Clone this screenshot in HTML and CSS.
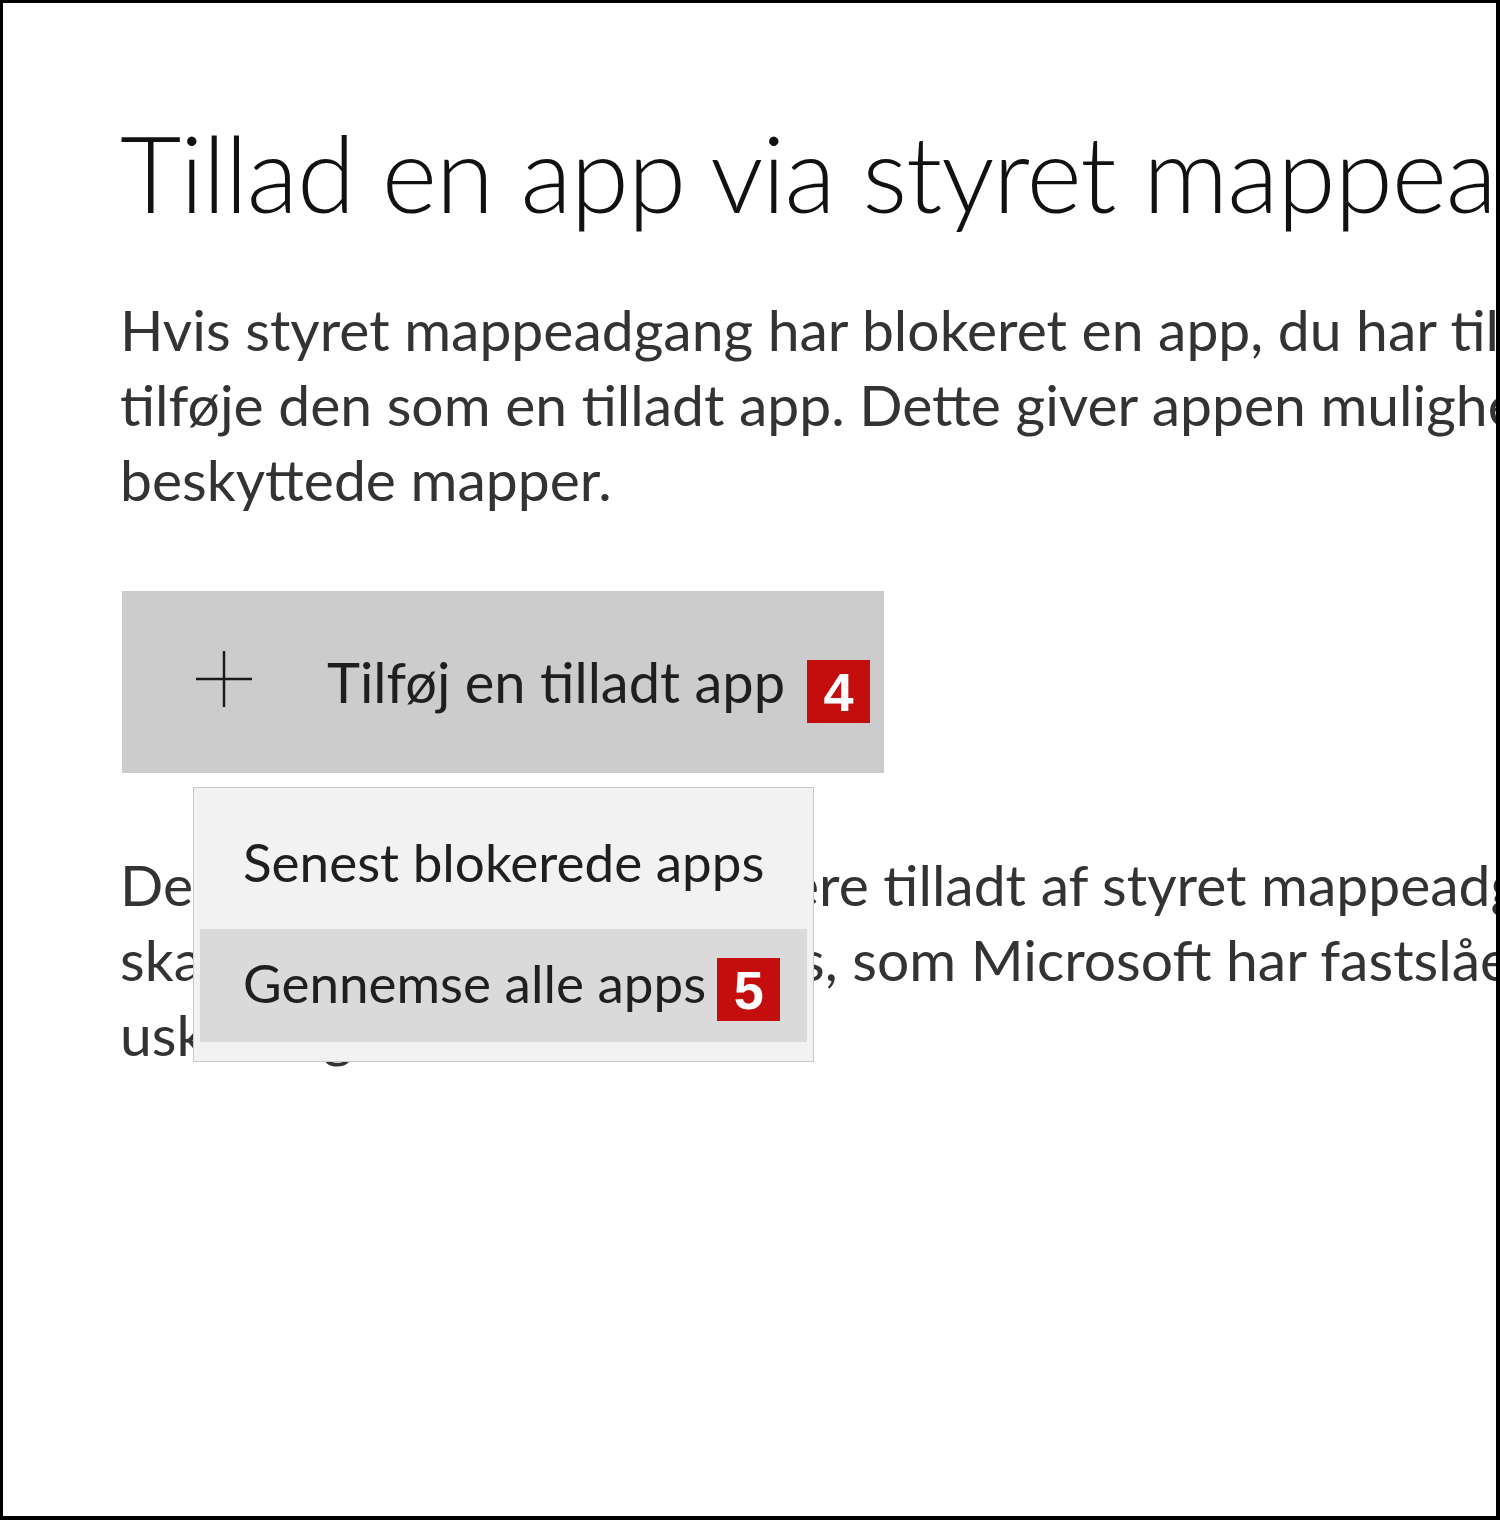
FILE: index.html
```html
<!DOCTYPE html>
<html lang="da">
<head>
<meta charset="utf-8">
<title>Tillad en app via styret mappeadgang</title>
<link rel="stylesheet" href="styles.css">
</head>
<body>
<div class="frame">
  <div class="content">
    <h1 class="title">Tillad en app via styret mappeadgang</h1>
    <p class="desc">Hvis styret mappeadgang har blokeret en app, du har tillid til, kan du<br>tilføje den som en tilladt app. Dette giver appen mulighed for at foretage ændringer i<br>beskyttede mapper.</p>
    <div class="btn-area">
      <button class="add-btn" type="button">
        <svg class="plus" viewBox="0 0 56 56" aria-hidden="true"><path d="M28 0V56M0 28H56" /></svg>
        <span class="btn-label">Tilføj en tilladt app</span>
        <span class="badge badge-btn">4</span>
      </button>
      <div class="menu">
        <div class="menu-item">Senest blokerede apps</div>
        <div class="menu-item menu-item-hover">Gennemse alle apps<span class="badge badge-menu">5</span></div>
      </div>
    </div>
    <p class="desc desc-2">De fleste af dine apps vil være tilladt af styret mappeadgang, uden at du behøver<br>skal tilføje dem her. De apps, som Microsoft har fastslået som venlige, er altid<br>uskadelige.</p>
  </div>
</div>
</body>
</html>
```
FILE: styles.css
```css
html, body {
  margin: 0;
  padding: 0;
  background: #ffffff;
}

.frame {
  box-sizing: border-box;
  width: 1500px;
  height: 1520px;
  border-style: solid;
  border-color: #000000;
  border-width: 3px 4px 4px 3px;
  background: #ffffff;
  overflow: hidden;
}

.content {
  padding: 104px 0 0 117px;
  font-family: "Lato", "Open Sans", sans-serif;
  white-space: nowrap;
}

.title {
  margin: 0;
  font-size: 106px;
  line-height: 130px;
  font-weight: 300;
  letter-spacing: -1.2px;
  color: #111111;
}

.desc {
  margin: 55px 0 0 0;
  font-size: 57px;
  line-height: 75px;
  font-weight: 400;
  color: #333333;
}

.desc-2 {
  margin-top: 74px;
}

.btn-area {
  position: relative;
  margin-top: 74px;
}

.add-btn {
  display: flex;
  align-items: center;
  box-sizing: border-box;
  width: 762px;
  height: 182px;
  margin: 0 0 0 2px;
  padding: 0 0 0 74px;
  border: none;
  background: #cccccc;
  font-family: inherit;
  cursor: pointer;
}

.plus {
  width: 56px;
  height: 56px;
  flex: none;
  margin-top: -6px;
}

.plus path {
  stroke: #1a1a1a;
  stroke-width: 2.5;
  fill: none;
}

.btn-label {
  margin-left: 75px;
  font-size: 56px;
  line-height: 1;
  color: #1f1f1f;
}

.badge {
  display: inline-flex;
  align-items: center;
  justify-content: center;
  box-sizing: border-box;
  width: 63px;
  height: 63px;
  background: #c40d0d;
  color: #ffffff;
  font-family: "Liberation Sans", Arial, sans-serif;
  font-weight: 700;
  font-size: 54px;
  line-height: 1;
  flex: none;
}

.badge-btn {
  margin-left: 22px;
  margin-top: 19px;
}

.menu {
  position: absolute;
  left: 73px;
  top: 196px;
  box-sizing: border-box;
  width: 621px;
  height: 275px;
  padding: 20px 6px 19px 6px;
  border: 1px solid #c9c9c9;
  background: #f2f2f2;
  display: flex;
  flex-direction: column;
  gap: 8px;
}

.menu-item {
  display: flex;
  align-items: center;
  box-sizing: border-box;
  height: 113px;
  padding-left: 43px;
  padding-bottom: 6px;
  font-size: 53px;
  color: #1f1f1f;
}

.menu-item-hover {
  background: #dadada;
}

.badge-menu {
  margin-left: 11px;
  margin-top: 14px;
}
```
